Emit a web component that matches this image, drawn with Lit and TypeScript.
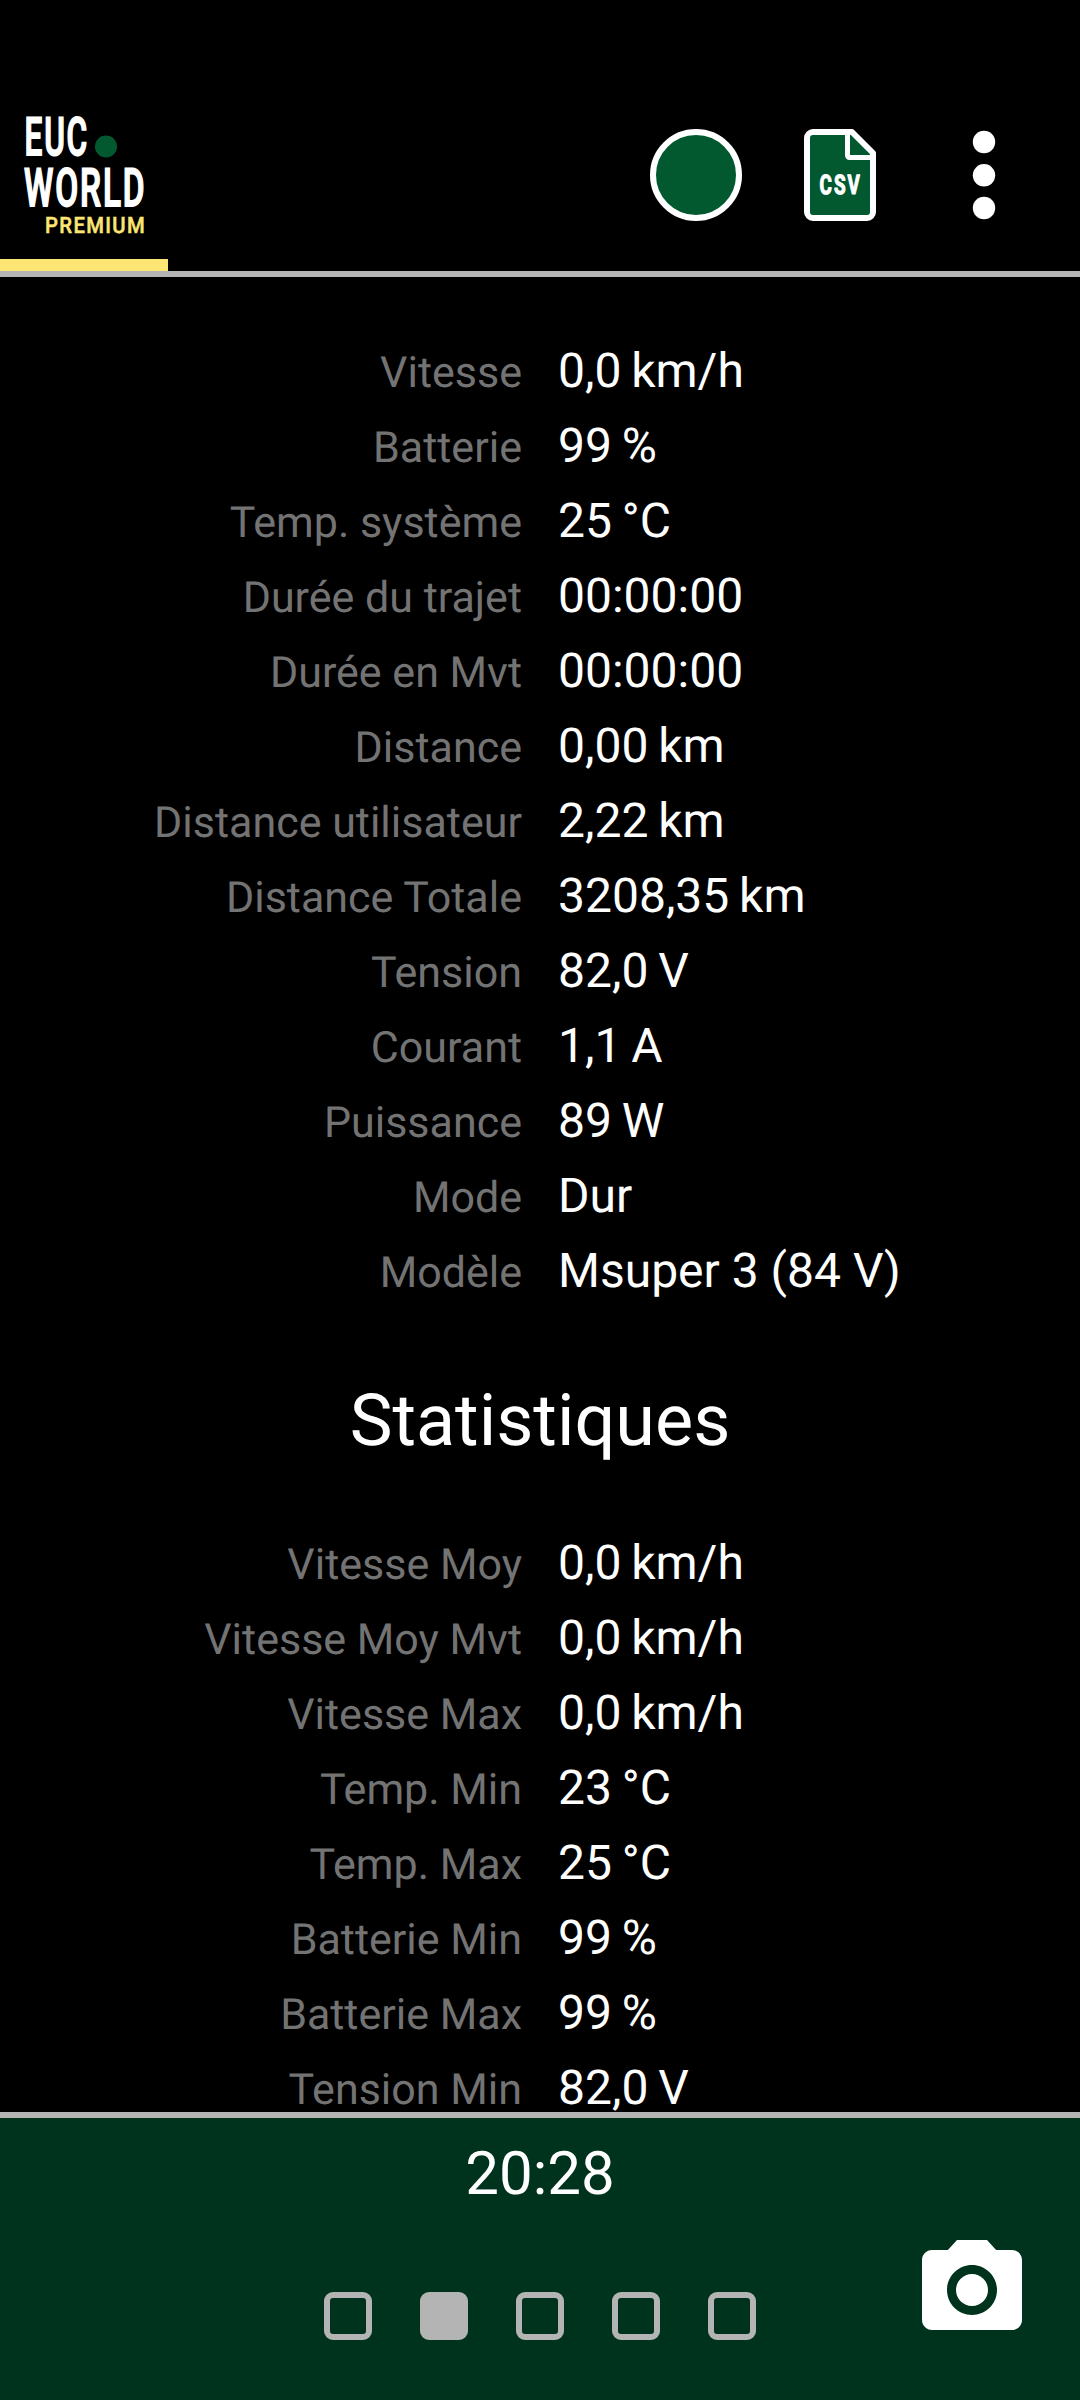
import { LitElement, html, css } from "lit";
import { customElement, property } from "lit/decorators.js";

type Reading = [label: string, value: string];

const LIVE: Reading[] = [
  ["Vitesse", "0,0\u2009km/h"],
  ["Batterie", "99\u2009%"],
  ["Temp. système", "25\u2009°C"],
  ["Durée du trajet", "00:00:00"],
  ["Durée en Mvt", "00:00:00"],
  ["Distance", "0,00\u2009km"],
  ["Distance utilisateur", "2,22\u2009km"],
  ["Distance Totale", "3208,35\u2009km"],
  ["Tension", "82,0\u2009V"],
  ["Courant", "1,1\u2009A"],
  ["Puissance", "89\u2009W"],
  ["Mode", "Dur"],
  ["Modèle", "Msuper 3 (84 V)"],
];

const STATS: Reading[] = [
  ["Vitesse Moy", "0,0\u2009km/h"],
  ["Vitesse Moy Mvt", "0,0\u2009km/h"],
  ["Vitesse Max", "0,0\u2009km/h"],
  ["Temp. Min", "23\u2009°C"],
  ["Temp. Max", "25\u2009°C"],
  ["Batterie Min", "99\u2009%"],
  ["Batterie Max", "99\u2009%"],
  ["Tension Min", "82,0\u2009V"],
];

@customElement("reading-list")
class ReadingList extends LitElement {
  @property({ attribute: false }) items: Reading[] = [];

  static styles = css`
    :host {
      display: block;
    }
    .row {
      display: grid;
      grid-template-columns: 1fr 1fr;
      column-gap: 36px;
      align-items: baseline;
      height: 75px;
      line-height: 75px;
      white-space: pre;
    }
    .label {
      text-align: right;
      font-size: 43px;
      color: #737373;
    }
    .value {
      font-size: 48px;
      color: #fff;
    }
  `;

  render() {
    return this.items.map(
      ([label, value]) => html`<div class="row">
        <span class="label">${label}</span><span class="value">${value}</span>
      </div>`
    );
  }
}

@customElement("app-root")
class AppRoot extends LitElement {
  static styles = css`
    :host {
      display: flex;
      flex-direction: column;
      width: 1080px;
      height: 2400px;
      overflow: hidden;
      background: #000;
      color: #fff;
      font-family: Roboto, sans-serif;
      text-rendering: geometricPrecision;
    }
    svg {
      display: block;
    }
    .header {
      box-sizing: border-box;
      flex: none;
      height: 277px;
      padding-top: 79px;
      border-bottom: 6px solid #b4b4b4;
      display: flex;
      justify-content: space-between;
    }
    .brand {
      width: 168px;
      box-sizing: border-box;
      border-bottom: 12px solid #fce573;
    }
    .actions {
      display: flex;
      align-items: flex-start;
      padding: 50px 85px 0 0;
    }
    .record {
      box-sizing: border-box;
      width: 92px;
      height: 92px;
      border: 6px solid #fff;
      border-radius: 50%;
      background: #025930;
      margin-right: 62px;
    }
    .csv {
      margin-right: 97px;
    }
    .content {
      flex: 1;
      min-height: 0;
      overflow: hidden;
      padding-top: 56px;
    }
    .title {
      margin: 0;
      padding-top: 8px;
      font-size: 72px;
      font-weight: 400;
      line-height: 209px;
      text-align: center;
    }
    .footer {
      box-sizing: border-box;
      flex: none;
      height: 288px;
      border-top: 6px solid #b4b4b4;
      background: #00331d;
      display: grid;
      grid-template-columns: 1fr auto 1fr;
      grid-template-rows: 112px 1fr;
    }
    .clock {
      grid-column: 1 / -1;
      text-align: center;
      font-size: 60px;
      line-height: 112px;
    }
    .pages {
      grid-column: 2;
      display: flex;
      gap: 48px;
      padding-top: 62px;
    }
    .page {
      box-sizing: border-box;
      width: 48px;
      height: 48px;
      border: 6px solid #b4b4b4;
      border-radius: 9px;
    }
    .current {
      background: #b4b4b4;
    }
    .camera {
      justify-self: end;
      padding: 10px 58px 0 0;
    }
  `;

  render() {
    return html`
      <header class="header">
        <div class="brand">
          <svg width="168" height="170" viewBox="0 79 168 170" font-family="Roboto, sans-serif">
            <g fill="#fff" stroke="#fff" stroke-width="1.8" font-size="53" font-weight="500" letter-spacing="3">
              <text x="24.500" y="155.300" textLength="64.500" lengthAdjust="spacingAndGlyphs">EUC</text>
              <text x="24" y="206.300" textLength="122.500" lengthAdjust="spacingAndGlyphs">WORLD</text>
            </g>
            <circle cx="106" cy="146.500" r="11" fill="#025930" />
            <text x="45" y="232.500" font-size="22.500" font-weight="500" letter-spacing="1.5" fill="#fce573" stroke="#fce573" stroke-width=".5" textLength="101" lengthAdjust="spacingAndGlyphs">PREMIUM</text>
          </svg>
        </div>
        <div class="actions">
          <div class="record"></div>
          <svg class="csv" width="72" height="92" viewBox="0 0 72 92">
            <path d="M9 3H48L69 24V83a6 6 0 0 1-6 6H9a6 6 0 0 1-6-6V9a6 6 0 0 1 6-6Z" fill="#025930" stroke="#fff" stroke-width="6" stroke-linejoin="round" />
            <path d="M43.500 4V26.500a2 2 0 0 0 2 2H69" fill="none" stroke="#fff" stroke-width="5" />
            <text x="15.500" y="65" font-family="Roboto, sans-serif" font-size="27" font-weight="700" letter-spacing="3" fill="#fff" stroke="#fff" stroke-width="1.2" stroke-linejoin="round" textLength="42.500" lengthAdjust="spacingAndGlyphs">CSV</text>
          </svg>
          <svg width="22" height="92" viewBox="0 0 22 92" fill="#fff" overflow="visible">
            <circle cx="11" cy="13" r="11.200" />
            <circle cx="11" cy="46.300" r="11.200" />
            <circle cx="11" cy="79" r="11.200" />
          </svg>
        </div>
      </header>
      <main class="content">
        <reading-list .items=${LIVE}></reading-list>
        <h1 class="title">Statistiques</h1>
        <reading-list .items=${STATS}></reading-list>
      </main>
      <footer class="footer">
        <div class="clock">20:28</div>
        <div class="pages">
          ${[0, 1, 2, 3, 4].map((i) => html`<div class="page ${i === 1 ? "current" : ""}"></div>`)}
        </div>
        <div class="camera">
          <svg width="100" height="90" viewBox="2 2 20 18" fill="#fff">
            <circle cx="12" cy="12" r="3.200" />
            <path d="M9 2 7.170 4H4c-1.100 0-2 .9-2 2v12c0 1.100.9 2 2 2h16c1.100 0 2-.9 2-2V6c0-1.100-.9-2-2-2h-3.170L15 2H9zm3 15c-2.760 0-5-2.240-5-5s2.240-5 5-5 5 2.240 5 5-2.240 5-5 5z" />
          </svg>
        </div>
      </footer>
    `;
  }
}
